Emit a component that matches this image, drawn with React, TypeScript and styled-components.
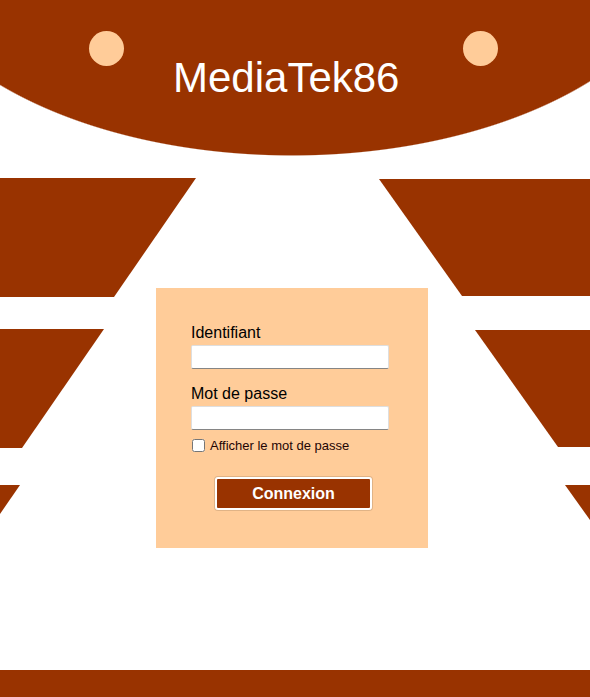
import React from "react";
import styled, { createGlobalStyle } from "styled-components";

const BROWN = "#993300";
const PEACH = "#ffcc99";

const GlobalStyle = createGlobalStyle`
  html, body {
    margin: 0;
    padding: 0;
    background: #ffffff;
  }
  body {
    font-family: "Liberation Sans", Arial, sans-serif;
  }
  * { box-sizing: border-box; }
`;

const Page = styled.div`
  display: flex;
  flex-direction: column;
  width: 100%;
`;

const Header = styled.header`
  height: 160px;
  display: flex;
  align-items: flex-start;
  padding: 31px 0 0 89px;
  background: radial-gradient(
    ellipse 400px 222px at 292px -66px,
    ${BROWN} 99.5%,
    rgba(153, 51, 0, 0) 100%
  );
`;

const Dot = styled.span`
  display: block;
  flex-shrink: 0;
  width: 35px;
  height: 35px;
  border-radius: 50%;
  background: ${PEACH};
`;

const Title = styled.h1`
  margin: 26px 64px 0 49px;
  font-size: 42px;
  line-height: 42px;
  font-weight: normal;
  color: #ffffff;
  white-space: nowrap;
`;

const Stage = styled.main`
  display: grid;
  height: 510px;
`;

const DecorColumn = styled.div<{ $side: "left" | "right" }>`
  grid-area: 1 / 1;
  justify-self: ${(p) => (p.$side === "left" ? "start" : "end")};
  align-self: start;
  display: flex;
  flex-direction: column;
  align-items: ${(p) => (p.$side === "left" ? "flex-start" : "flex-end")};
  padding-top: 18px;
`;

const Slab = styled.div<{
  $side: "left" | "right";
  $w: number;
  $h: number;
  $bottom: number;
  $top: number;
}>`
  width: ${(p) => p.$w}px;
  height: ${(p) => p.$h}px;
  margin-top: ${(p) => p.$top}px;
  background: ${BROWN};
  clip-path: ${(p) =>
    p.$side === "left"
      ? `polygon(0 0, 100% 0, ${p.$bottom}px 100%, 0 100%)`
      : `polygon(0 0, 100% 0, 100% 100%, ${p.$w - p.$bottom}px 100%)`};
`;

const Card = styled.form`
  grid-area: 1 / 1;
  justify-self: start;
  align-self: start;
  margin: 128px 0 0 156px;
  width: 272px;
  height: 260px;
  padding: 36px 0 0 35px;
  background: ${PEACH};
  display: flex;
  flex-direction: column;
  align-items: flex-start;
`;

const FieldLabel = styled.label<{ $first?: boolean }>`
  display: block;
  margin-top: ${(p) => (p.$first ? 0 : 16)}px;
  font-size: 16px;
  line-height: 18px;
  color: #000000;
`;

const TextInput = styled.input`
  width: 198px;
  height: 24px;
  margin: 3px 0 0 0;
  padding: 0 4px;
  background: #ffffff;
  border: 1px solid #dedede;
  border-bottom-color: #858585;
  border-radius: 2px;
  font-family: inherit;
  font-size: 13px;
  outline: none;
`;

const CheckRow = styled.label`
  display: flex;
  align-items: center;
  margin-top: 8px;
  height: 15px;
  font-size: 13px;
  line-height: 15px;
  color: #1e0505;
`;

const CheckBox = styled.input`
  width: 13px;
  height: 13px;
  margin: 0 5px 0 1px;
`;

const SubmitButton = styled.button`
  margin: 24px 0 0 24px;
  width: 157px;
  height: 33px;
  padding: 0;
  background: ${BROWN};
  color: #ffffff;
  border: 2px solid #ffffff;
  border-radius: 3px;
  box-shadow: 0 0 0 1px rgba(0, 0, 0, 0.12);
  font-family: inherit;
  font-size: 16px;
  font-weight: bold;
  cursor: pointer;
`;

const Footer = styled.footer`
  height: 27px;
  background: ${BROWN};
`;

export default function App() {
  return (
    <>
      <GlobalStyle />
      <Page>
        <Header>
          <Dot />
          <Title>MediaTek86</Title>
          <Dot />
        </Header>
        <Stage>
          <DecorColumn $side="left">
            <Slab $side="left" $w={196} $h={119} $bottom={114} $top={0} />
            <Slab $side="left" $w={104} $h={119} $bottom={22} $top={32} />
            <Slab $side="left" $w={20} $h={29} $bottom={0} $top={37} />
          </DecorColumn>
          <DecorColumn $side="right">
            <Slab $side="right" $w={211} $h={117} $bottom={128} $top={1} />
            <Slab $side="right" $w={115} $h={117} $bottom={32} $top={34} />
            <Slab $side="right" $w={25} $h={35} $bottom={0} $top={38} />
          </DecorColumn>
          <Card onSubmit={(e) => e.preventDefault()}>
            <FieldLabel $first htmlFor="login">
              Identifiant
            </FieldLabel>
            <TextInput id="login" type="text" />
            <FieldLabel htmlFor="pwd">Mot de passe</FieldLabel>
            <TextInput id="pwd" type="password" />
            <CheckRow>
              <CheckBox type="checkbox" />
              Afficher le mot de passe
            </CheckRow>
            <SubmitButton type="submit">Connexion</SubmitButton>
          </Card>
        </Stage>
        <Footer />
      </Page>
    </>
  );
}
